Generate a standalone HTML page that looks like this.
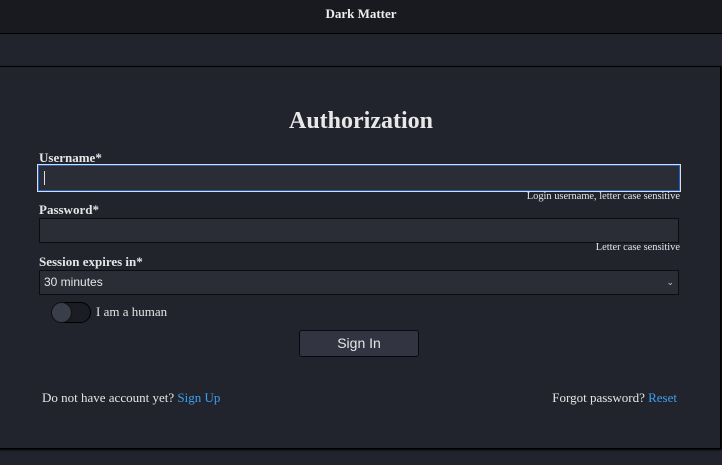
<!DOCTYPE html>
<html><head><style>
*{box-sizing:border-box;margin:0;padding:0}
body{width:722px;height:465px;background:#22242d;font-family:"Liberation Serif",serif;color:#e6e6e6;position:relative;overflow:hidden}
.hdr{position:absolute;left:0;top:0;width:722px;height:34px;background:#191a1f;border-bottom:1px solid #000;text-align:center;font-weight:bold;font-size:13px;line-height:27px;color:#eee}
.panel{position:absolute;left:-2px;top:66px;width:723px;height:383px;border:1px solid #000;background:#22242d;box-shadow:1px 1px 2px #000}
.a{position:absolute}
h1{position:absolute;left:0;width:722px;top:108px;text-align:center;font-size:24px;font-weight:bold;color:#e8e8e8}
.lbl{font-size:13px;font-weight:bold}
.inp{background:#2a2c36;border:1px solid #0d0d10}
.hint{font-size:10.4px;text-align:right;width:300px}
a{color:#3c9ef0;text-decoration:none}
</style></head><body>
<div class="hdr">Dark Matter</div>
<div class="panel"></div>
<h1>Authorization</h1>
<div class="a lbl" style="left:39px;top:150px">Username*</div>
<div class="a inp" style="left:37px;top:164px;width:644px;height:28px;border:1px solid #ddd;outline:1px solid #1a5fd0;outline-offset:-2px"><div style="position:absolute;left:6px;top:6px;width:1px;height:14px;background:#ddd"></div></div>
<div class="a hint" style="left:380px;top:191px">Login username, letter case sensitive</div>
<div class="a lbl" style="left:39px;top:202px">Password*</div>
<div class="a inp" style="left:39px;top:218px;width:640px;height:25px"></div>
<div class="a hint" style="left:380px;top:242px">Letter case sensitive</div>
<div class="a lbl" style="left:39px;top:254px">Session expires in*</div>
<div class="a inp" style="left:39px;top:270px;width:640px;height:25px;font-family:'Liberation Sans',sans-serif;font-size:12px;line-height:23px;padding-left:4px">30 minutes<span style="position:absolute;right:4px;top:0;font-size:9px;color:#ccc">&#8964;</span></div>
<div class="a" style="left:51px;top:302px;width:40px;height:21px;border-radius:11px;background:#1c1d24;border:1px solid #000"></div>
<div class="a" style="left:51px;top:302px;width:21px;height:21px;border-radius:50%;background:#3a3d4a;border:1px solid #111"></div>
<div class="a" style="left:96px;top:304px;font-size:13px">I am a human</div>
<div class="a" style="left:299px;top:330px;width:120px;height:27px;background:#323541;border:1px solid #0a0a0c;border-radius:3px;font-family:'Liberation Sans',sans-serif;font-size:14px;text-align:center;line-height:25px">Sign In</div>
<div class="a" style="left:42px;top:390px;font-size:13px">Do not have account yet? <a>Sign Up</a></div>
<div class="a" style="right:45px;top:390px;font-size:13px">Forgot password? <a>Reset</a></div>
</body></html>
